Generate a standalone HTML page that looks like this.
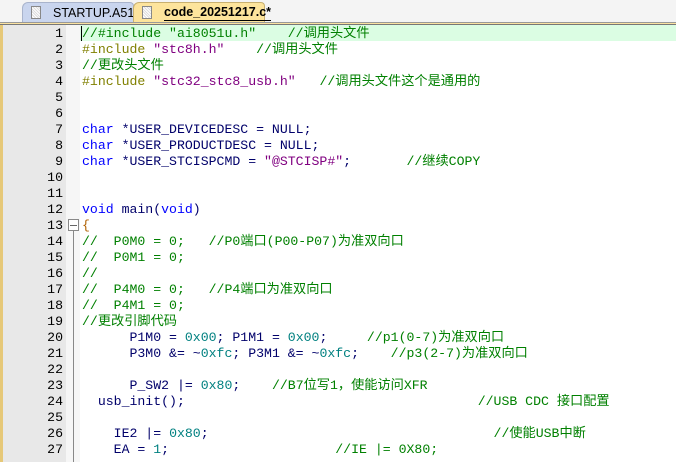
<!DOCTYPE html>
<html><head><meta charset="utf-8">
<style>
*{margin:0;padding:0;box-sizing:border-box}
body{width:676px;height:462px;overflow:hidden;background:#fff;position:relative;font-family:"Liberation Sans",sans-serif}
#bar{position:absolute;left:0;top:0;width:676px;height:22px;background:#f4f4f4}
.tab{position:absolute;top:2px;height:21px;font-size:12.5px;color:#000;line-height:20px}
#t1{left:22px;width:112px;background:#c9d5ee;border:1px solid #a9b4cc;border-bottom:none;border-radius:6px 4px 0 0}
#t2{left:133px;width:132px;background:#fde49c;border:1px solid #c8b070;border-bottom:none;border-radius:6px 4px 0 0}
.ic{position:absolute;top:3px;width:10px;height:13px;background:#fff;border:1px solid #888;background-image:repeating-linear-gradient(45deg,#ddd 0 1px,#fff 1px 2px)}
#line{position:absolute;left:0;top:22px;width:676px;height:3px;background:#fbe2a0;border-top:1px solid #999;border-bottom:1px solid #777}
#gut{position:absolute;left:0;top:25px;width:66px;height:437px;background:#e8e8e8;border-left:3px solid #e6c878}
#fold{position:absolute;left:66px;top:25px;width:14px;height:437px;background:#f6f6f6}
#hl{position:absolute;left:80px;top:25px;width:596px;height:16px;background:#dbfde3}
#cur{position:absolute;left:81px;top:26px;width:1px;height:15px;background:#000}
pre{position:absolute;top:26px;font-family:"Liberation Mono","Noto Sans CJK SC",monospace;font-size:13.2px;line-height:16px;color:#00006a}
#nums{left:0;width:63px;text-align:right;color:#000}
#code{left:82px}
.c{color:#008000;font-family:"Liberation Mono","Noto Sans CJK SC",monospace}
.k{color:#0000ff}.s{color:#800080}.p{color:#808000}.n{color:#008080}.b{color:#b06000}
</style></head><body>
<div id="bar"></div>
<div class="tab" id="t1"><div class="ic" style="left:8px"></div><span style="position:absolute;left:30px">STARTUP.A51</span></div>
<div class="tab" id="t2"><div class="ic" style="left:8px"></div><span style="position:absolute;left:30px;font-weight:bold;border-bottom:1px solid #000;line-height:16px;top:1px">code_20251217.c*</span></div>
<div id="line"></div>
<div id="gut"></div>
<div id="fold"></div>
<div style="position:absolute;left:68px;top:219px;width:11px;height:12px;border:1px solid #888;background:#fff"></div>
<div style="position:absolute;left:70px;top:225px;width:7px;height:1px;background:#666"></div>
<div style="position:absolute;left:73px;top:231px;width:1px;height:231px;background:#888"></div>
<div id="hl"></div>
<pre id="nums">1
2
3
4
5
6
7
8
9
10
11
12
13
14
15
16
17
18
19
20
21
22
23
24
25
26
27</pre>
<pre id="code"><span class="c">//#include "ai8051u.h"    //调用头文件</span>
<span class="p">#include</span> <span class="s">"stc8h.h"</span>    <span class="c">//调用头文件</span>
<span class="c">//更改头文件</span>
<span class="p">#include</span> <span class="s">"stc32_stc8_usb.h"</span>   <span class="c">//调用头文件这个是通用的</span>


<span class="k">char</span> *USER_DEVICEDESC = NULL;
<span class="k">char</span> *USER_PRODUCTDESC = NULL;
<span class="k">char</span> *USER_STCISPCMD = <span class="s">"@STCISP#"</span>;       <span class="c">//继续COPY</span>


<span class="k">void</span> main(<span class="k">void</span>)
<span class="b">{</span>
<span class="c">//  P0M0 = 0;   //P0端口(P00-P07)为准双向口</span>
<span class="c">//  P0M1 = 0;</span>
<span class="c">//</span>
<span class="c">//  P4M0 = 0;   //P4端口为准双向口</span>
<span class="c">//  P4M1 = 0;</span>
<span class="c">//更改引脚代码</span>
      P1M0 = <span class="n">0x00</span>; P1M1 = <span class="n">0x00</span>;     <span class="c">//p1(0-7)为准双向口</span>
      P3M0 &amp;= ~<span class="n">0xfc</span>; P3M1 &amp;= ~<span class="n">0xfc</span>;    <span class="c">//p3(2-7)为准双向口</span>

      P_SW2 |= <span class="n">0x80</span>;    <span class="c">//B7位写1，使能访问XFR</span>
  usb_init();                                     <span class="c">//USB CDC 接口配置</span>

    IE2 |= <span class="n">0x80</span>;                                    <span class="c">//使能USB中断</span>
    EA = <span class="n">1</span>;                     <span class="c">//IE |= 0X80;</span></pre>
<div id="cur"></div>
</body></html>
